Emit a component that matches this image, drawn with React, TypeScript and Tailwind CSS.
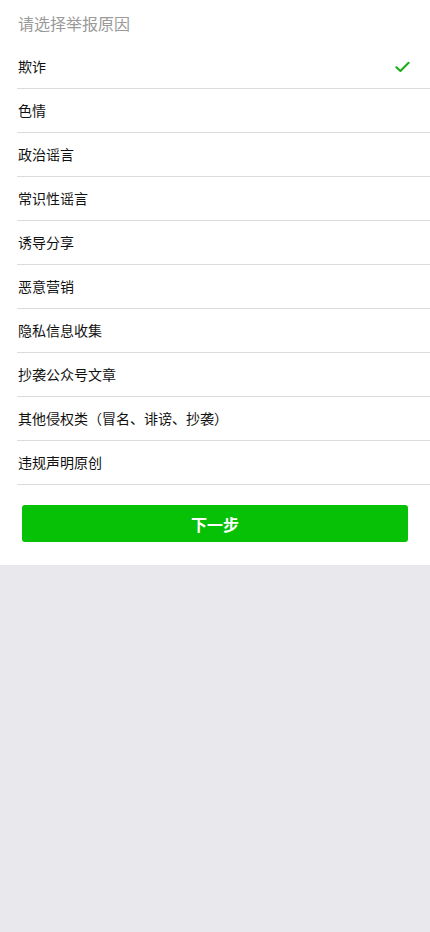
import React, { useState } from 'react';

const reasons = [
  '欺诈',
  '色情',
  '政治谣言',
  '常识性谣言',
  '诱导分享',
  '恶意营销',
  '隐私信息收集',
  '抄袭公众号文章',
  '其他侵权类（冒名、诽谤、抄袭）',
  '违规声明原创',
];

const font = { fontFamily: '"Noto Sans CJK SC", "Noto Sans", sans-serif' };

export default function App() {
  const [selected, setSelected] = useState(0);

  return (
    <div className="min-h-[932px] bg-[#e9e8ed]" style={font}>
      <div className="bg-white pb-[23px]">
        <div className="h-[45px] flex items-center pl-[18px] pt-px text-[16px] text-[#9a9a9a]">请选择举报原因</div>
        <ul className="pl-[17px]">
          {reasons.map((r, i) => (
            <li
              key={r}
              onClick={() => setSelected(i)}
              className="h-11 flex items-center justify-between pr-5 border-b border-[#dcdcdc] cursor-pointer"
            >
              <span className="pl-px text-[14px] text-[#111]">{r}</span>
              {selected === i && (
                <svg width="15" height="12" viewBox="0 0 16 12" fill="none">
                  <path d="M1.5 6.2 L5.8 10.2 L14.5 1.5" stroke="#1aad19" strokeWidth="2.2" strokeLinecap="round" strokeLinejoin="round" />
                </svg>
              )}
            </li>
          ))}
        </ul>
        <div className="px-[22px] pt-5">
          <button className="w-full h-[37px] rounded-[3px] bg-[#06c106] text-white text-[16px] font-bold">下一步</button>
        </div>
      </div>
    </div>
  );
}
